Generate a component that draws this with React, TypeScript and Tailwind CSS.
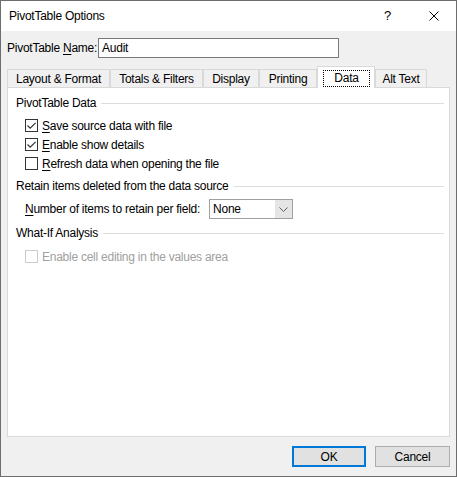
import React from "react";

const font = { fontFamily: '"Liberation Sans", Arial, sans-serif' };

function CheckBox({ checked, disabled }: { checked?: boolean; disabled?: boolean }) {
  return (
    <span
      className={
        "flex h-[13px] w-[13px] shrink-0 items-center justify-center border bg-white " +
        (disabled ? "border-[#cccccc]" : "border-[#333333]")
      }
    >
      {checked && (
        <svg width="11" height="11" viewBox="0 0 11 11">
          <path d="M1.5 5.5 L4.2 8.2 L9.6 2.8" fill="none" stroke="#333333" strokeWidth="1.2" />
        </svg>
      )}
    </span>
  );
}

function GroupHeader({ title }: { title: string }) {
  return (
    <div className="flex h-[16px] items-center pl-[8px] pr-[5px]">
      <span className="whitespace-nowrap leading-[16px]">{title}</span>
      <span className="ml-[5px] h-px flex-1 bg-[#dcdcdc]" />
    </div>
  );
}

function CheckRow({
  checked,
  disabled,
  accel,
  rest,
}: {
  checked?: boolean;
  disabled?: boolean;
  accel?: string;
  rest: string;
}) {
  return (
    <div className="flex h-[19px] items-center pl-[17px]">
      <CheckBox checked={checked} disabled={disabled} />
      <span className={"ml-[4px] whitespace-nowrap leading-[16px] " + (disabled ? "text-[#a0a0a0]" : "")}>
        {accel && <u className="underline-offset-2">{accel}</u>}
        {rest}
      </span>
    </div>
  );
}

const tabs = [
  { label: "Layout & Format", w: "w-[103px]" },
  { label: "Totals & Filters", w: "w-[93px]" },
  { label: "Display", w: "w-[56px]" },
  { label: "Printing", w: "w-[58px]" },
  { label: "Data", w: "w-[58px]", active: true },
  { label: "Alt Text", w: "w-[52px]" },
];

export default function App() {
  return (
    <div
      className="flex h-[477px] w-[457px] flex-col border border-[#6d6d6d] bg-[#f0f0f0] text-[12px] tracking-[-0.25px] text-black"
      style={font}
    >
      {/* title bar */}
      <div className="flex h-[30px] shrink-0 items-center bg-white">
        <span className="ml-[8px] leading-[16px]">PivotTable Options</span>
        <span className="ml-auto mr-[38px] text-[13px] leading-[16px]">?</span>
        <svg className="mr-[17px]" width="10" height="10" viewBox="0 0 10 10">
          <path d="M0.5 0.5 L9.5 9.5 M9.5 0.5 L0.5 9.5" stroke="#000" strokeWidth="1" />
        </svg>
      </div>

      {/* name row */}
      <div className="mt-[7px] flex h-[20px] items-center pl-[6px]">
        <span className="mr-px whitespace-nowrap leading-[16px]">
          PivotTable <u className="underline-offset-2">N</u>ame:
        </span>
        <div className="flex h-[20px] w-[241px] items-center border border-[#7a7a7a] bg-white pl-[3px] leading-[16px]">
          Audit
        </div>
      </div>

      {/* tab strip */}
      <div className="mt-[8px] flex h-[21px] items-end pl-[6px]">
        {tabs.map((t) =>
          t.active ? (
            <div
              key={t.label}
              className={
                "relative z-10 -mb-px flex h-[22px] shrink-0 flex-col border border-b-0 border-[#d9d9d9] bg-white " +
                t.w
              }
            >
              <div className="ml-[5px] mr-[4px] mt-[3px] flex h-[17px] items-end justify-center border border-dotted border-black leading-[15px]">
                {t.label}
              </div>
            </div>
          ) : (
            <div
              key={t.label}
              className={
                "flex h-[18px] shrink-0 items-end justify-center border border-b-0 border-[#d9d9d9] bg-[#f0f0f0] leading-[16px] " +
                t.w
              }
            >
              {t.label}
            </div>
          )
        )}
      </div>

      {/* tab page */}
      <div className="mx-[6px] flex h-[350px] flex-col border border-[#d9d9d9] bg-white pt-[7px]">
        <GroupHeader title="PivotTable Data" />
        <div className="mt-[5px]">
          <CheckRow checked accel="S" rest="ave source data with file" />
          <CheckRow checked accel="E" rest="nable show details" />
          <CheckRow accel="R" rest="efresh data when opening the file" />
        </div>

        <div className="mt-[5px]">
          <GroupHeader title="Retain items deleted from the data source" />
        </div>
        <div className="mt-[5px] flex h-[20px] items-center pl-[17px]">
          <span className="mr-[9px] whitespace-nowrap leading-[16px]">
            <u className="underline-offset-2">N</u>umber of items to retain per field:
          </span>
          <div className="flex h-[20px] w-[84px] items-center border border-[#a0a0a0] bg-white">
            <span className="flex-1 pl-[3px] leading-[16px]">None</span>
            <span className="flex h-full w-[17px] items-center justify-center bg-[#e5e5e5]">
              <svg width="9" height="5" viewBox="0 0 9 5">
                <path d="M0.5 0.5 L4.5 4.5 L8.5 0.5" fill="none" stroke="#606060" strokeWidth="1" />
              </svg>
            </span>
          </div>
        </div>

        <div className="mt-[6px]">
          <GroupHeader title="What-If Analysis" />
        </div>
        <div className="mt-[6px]">
          <CheckRow disabled rest="Enable cell editing in the values area" />
        </div>
      </div>

      {/* buttons */}
      <div className="mt-[9px] flex h-[21px] justify-end gap-[9px] pr-[6px]">
        <button className="flex h-[21px] w-[74px] items-center justify-center border-2 border-[#0078d7] bg-[#e1e1e1] leading-[16px]">
          OK
        </button>
        <button className="flex h-[21px] w-[75px] items-center justify-center border border-[#adadad] bg-[#e1e1e1] leading-[16px]">
          Cancel
        </button>
      </div>
    </div>
  );
}
